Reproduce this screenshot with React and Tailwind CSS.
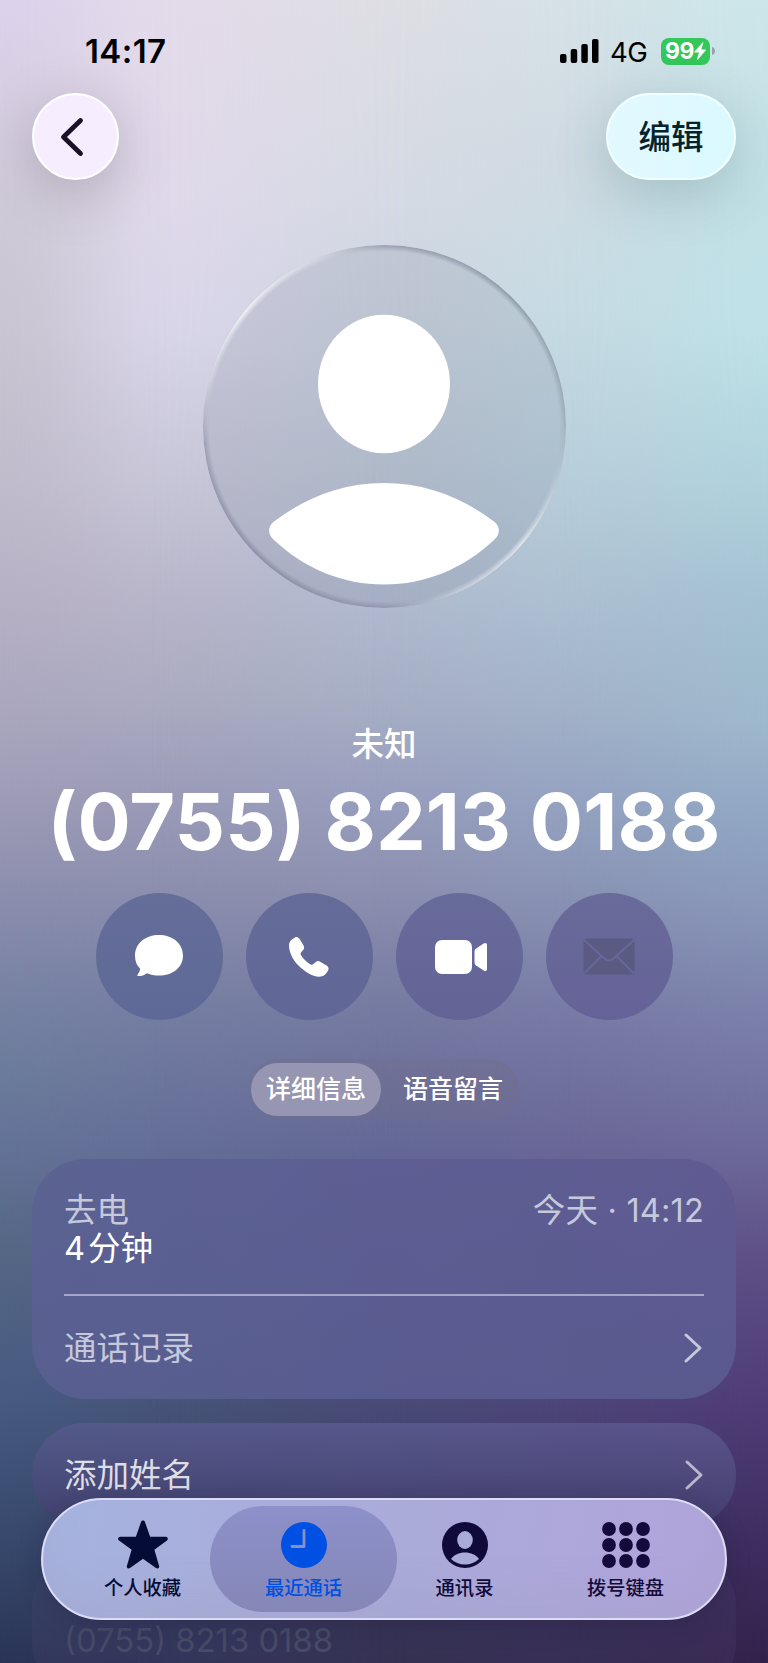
import React, { useState } from "react";

const font =
  "font-['Inter','Noto_Sans_CJK_SC',sans-serif]";

// Vertical colour ramps, each one eased in from left to right
const ramps = [
  "bg-[linear-gradient(180deg,#ddd2ec_0px,#cfcad8_200px,#c9c5d2_330px,#c0bccc_480px,#b7b1c5_600px,#aba8bf_700px,#a19eb8_780px,#8f90b0_880px,#7a84a5_980px,#6b7b9b_1080px,#657398_1140px,#566785_1250px,#475a82_1400px,#364669_1560px,#2a3556_1663px)]",
  "bg-[linear-gradient(180deg,#e4dbea_0px,#e0d9ea_200px,#dad6ea_330px,#c8c6d8_480px,#b8b5ca_600px,#ababc0_700px,#9c9cb9_790px,#8e90af_880px,#767fa3_1000px,#656f98_1140px,#515c82_1290px,#475478_1400px,#353d60_1560px,#2b3153_1663px)] [mask-image:linear-gradient(90deg,transparent_0px,rgba(0,0,0,0.16)_45px,rgba(0,0,0,0.5)_90px,rgba(0,0,0,0.84)_135px,black_180px)]",
  "bg-[linear-gradient(180deg,#dedee3_0px,#d5dae4_200px,#cad3de_330px,#bac5d4_480px,#b0bacf_600px,#a6afc4_700px,#999fbf_790px,#8e91b1_880px,#777ca2_1000px,#656997_1140px,#525487_1290px,#494b77_1400px,#363556_1560px,#2e2c4a_1663px)] [mask-image:linear-gradient(90deg,transparent_150px,rgba(0,0,0,0.16)_215px,rgba(0,0,0,0.5)_280px,rgba(0,0,0,0.84)_345px,black_410px)]",
  "bg-[linear-gradient(180deg,#d5e2e7_0px,#cfdae2_160px,#c7dce4_300px,#b9d0dc_460px,#acc0d1_600px,#a3b3c9_700px,#96a4c2_790px,#8b96b6_880px,#797da7_1000px,#6b6898_1140px,#574f85_1290px,#4e457a_1400px,#3a2f5c_1560px,#31284c_1663px)] [mask-image:linear-gradient(90deg,transparent_370px,rgba(0,0,0,0.16)_427px,rgba(0,0,0,0.5)_485px,rgba(0,0,0,0.84)_542px,black_600px)]",
  "bg-[linear-gradient(180deg,#cce6e9_0px,#c0e0e5_200px,#bee1e7_330px,#b0d2dc_480px,#a4c1d2_600px,#9db8cd_720px,#90a6c3_820px,#8a98ba_900px,#7c83ab_1000px,#6e6b9c_1140px,#5e4f86_1260px,#4f3d78_1400px,#3e2e60_1540px,#33224b_1663px)] [mask-image:linear-gradient(90deg,transparent_560px,rgba(0,0,0,0.16)_612px,rgba(0,0,0,0.5)_664px,rgba(0,0,0,0.84)_716px,black_768px)]",
];

function StatusBar() {
  return (
    <div className="flex h-[93px] items-start justify-between pl-[85px] pr-[53px] pt-[31px] text-black">
      <span className="text-[33px] font-semibold leading-[40px] tracking-[0.4px]">
        14:17
      </span>
      <div className="flex h-[40px] items-center">
        <svg width="39" height="24" viewBox="0 0 39 24">
          <rect x="0" y="15" width="6.5" height="9" rx="2" />
          <rect x="10.7" y="10" width="6.5" height="14" rx="2" />
          <rect x="21.3" y="5" width="6.5" height="19" rx="2" />
          <rect x="32" y="0" width="6.5" height="24" rx="2" />
        </svg>
        <span className="ml-[11px] w-[38px] whitespace-nowrap pt-[3px] text-[27.500px] leading-none tracking-[-0.5px]">
          4G
        </span>
        <div className="ml-[13px] flex h-[27px] w-[49px] items-center justify-center rounded-[8px] bg-[#34c759] text-white">
          <span className="text-[23px] font-bold leading-none tracking-[-0.5px]">
            99
          </span>
          <svg width="12" height="18" viewBox="0 0 12 18" fill="currentColor">
            <path d="M8.6.5.6 9.6c-.4.5-.1 1 .4 1h4L3 17.3c-.1.6.3.8.7.4l7.9-9.1c.4-.5.1-1-.4-1H7.3L9.300 1C9.400.3 9 .1 8.600.5Z" />
          </svg>
        </div>
        <svg className="ml-[2px]" width="3" height="8" viewBox="0 0 3 8">
          <path d="M0 0c4 1 4 7 0 8Z" fill="#93a3a8" />
        </svg>
      </div>
    </div>
  );
}

function Header() {
  return (
    <div className="flex items-center justify-between px-[32px]">
      <button className="flex h-[87px] w-[87px] items-center justify-center rounded-full border-2 border-white bg-[#f6eeff] shadow-[0_14px_54px_rgba(70,60,80,0.26)]">
        <svg
          className="-ml-[7px]"
          width="24"
          height="40"
          viewBox="0 0 24 40"
          fill="none"
          stroke="#1a1028"
          strokeWidth="4.800"
          strokeLinecap="round"
          strokeLinejoin="round"
        >
          <path d="M20.500 3.500 3.500 20 20.500 36.500" />
        </svg>
      </button>
      <button className="flex h-[87px] w-[130px] items-center justify-center rounded-full border-2 border-[#f2ffff] bg-linear-to-r from-[#e3f8ff] to-[#daf9ff] pt-[4px] text-[32.500px] font-medium text-[#06222a] shadow-[0_14px_54px_rgba(50,90,100,0.24)]">
        编辑
      </button>
    </div>
  );
}

function Avatar() {
  return (
    <div className="relative mx-auto mt-[65px] h-[363px] w-[363px] rounded-full bg-[#788294]/18">
      <svg width="363" height="363" viewBox="0 0 363 363" fill="white">
        <ellipse cx="181" cy="139" rx="66" ry="69.300" />
        <path d="M181 238c42 0 79 15 110 38.500 6.500 5 6.500 12.500 0 18.500-31 29-69 44.500-110 44.500S102 324 71 295c-6.500-6-6.500-13.500 0-18.500C102 253 139 238 181 238Z" />
      </svg>
      <div className="absolute inset-0 rounded-full bg-[conic-gradient(from_0deg,rgba(115,122,142,0.5)_0deg,rgba(115,125,142,0.6)_45deg,rgba(125,140,150,0.4)_85deg,rgba(255,255,255,0.1)_105deg,rgba(255,255,255,0.7)_130deg,rgba(255,255,255,0.4)_155deg,rgba(115,118,145,0.4)_180deg,rgba(115,118,145,0.6)_225deg,rgba(115,118,145,0.4)_265deg,rgba(255,255,255,0.3)_285deg,rgba(255,255,255,0.8)_310deg,rgba(255,255,255,0.3)_338deg,rgba(115,122,142,0.5)_360deg)] [mask-image:radial-gradient(circle_closest-side,transparent_96.500%,black_99.800%)]" />
    </div>
  );
}

const actions = [
  {
    id: "message",
    bg: "bg-linear-to-b from-[#656e99] to-[#5f6997]",
    icon: (
      <svg width="50" height="46" viewBox="0 0 50 46" fill="white">
        <path d="M25 1C38 1 49 9 49 21.500S38 41.500 25 41.500c-4.500 0-8.500-.8-12-2.300-2.600 2-5.500 2.800-8.500 2.800-1.200 0-1.500-.9-.8-1.800 1.600-1.700 2.400-3.400 2.300-5.600C2.700 31.500 1 27 1 21.500 1 9 12 1 25 1Z" />
      </svg>
    ),
  },
  {
    id: "call",
    bg: "bg-linear-to-b from-[#656c99] to-[#606797]",
    icon: (
      <svg width="42" height="42" viewBox="0 0 42 42" fill="white">
        <path d="M7 1.500C9 .5 10.500 1.500 12 3.500l3.500 6c1 2 .8 3-.3 4.500l-2 2.300c-.8 1-.8 1.800 0 3.200 2 3.300 5.500 6.700 9 8.700 1.300.8 2.300.7 3.200-.1l2.400-2c1.400-1.200 2.600-1.300 4.400-.3l6.300 3.700c2 1.300 2.600 2.800 1.700 4.800-1.700 3.800-5 6.400-9 6.400-7 0-15-5.500-21-11.500S1 15.500 1 9.500C1 6 3.500 3 7 1.500Z" />
      </svg>
    ),
  },
  {
    id: "video",
    bg: "bg-linear-to-b from-[#676b9a] to-[#636496]",
    icon: (
      <svg
        className="ml-[3px]"
        width="54"
        height="36"
        viewBox="0 0 54 36"
        fill="white"
      >
        <rect x="1" y="1" width="37" height="34" rx="7" />
        <path d="M40.500 13c0-1.500.4-2.500 1.600-3.500l7.500-5C51.500 3.300 53 4 53 6v24c0 2-1.500 2.700-3.400 1.500l-7.500-5c-1.200-1-1.600-2-1.600-3.500Z" />
      </svg>
    ),
  },
  {
    id: "mail",
    bg: "bg-linear-to-b from-[#696b9a] to-[#656297]",
    icon: (
      <svg width="52" height="37" viewBox="0 0 52 37">
        <rect x="0.500" y="0.500" width="51" height="36" rx="4" fill="#5a5a83" />
        <path
          d="M1 2 21.500 20.500c3 2.700 6 2.700 9 0L51 2M1.500 35 18 18.500M50.500 35 34 18.500"
          fill="none"
          stroke="#67679a"
          strokeWidth="2"
        />
      </svg>
    ),
  },
];

function Chevron({ className = "" }) {
  return (
    <svg
      className={className}
      width="20"
      height="32"
      viewBox="0 0 20 32"
      fill="none"
      stroke="currentColor"
      strokeWidth="3"
      strokeLinecap="round"
      strokeLinejoin="round"
    >
      <path d="M3 3 17 16 3 29" />
    </svg>
  );
}

function CallCard() {
  return (
    <div className="mx-[32px] mt-[39px] h-[240px] rounded-[54px] bg-[linear-gradient(170deg,transparent_0%,rgba(78,84,134,0.4)_100%),linear-gradient(90deg,#5b6393_0%,#5e5f94_50%,#625c94_100%)] px-[32px] text-[32.500px] text-[#c6c8dc]">
      <div className="h-[135px] pt-[33px]">
        <div className="flex justify-between leading-[38px]">
          <span>去电</span>
          <span className="tracking-[0.2px]">今天 · 14:12</span>
        </div>
        <div className="leading-[38px] text-white">
          <span className="mr-[3px]">4</span>分钟
        </div>
      </div>
      <div className="h-[2px] bg-[#a5a6c8]" />
      <div className="flex h-[103px] items-center justify-between">
        <span className="pt-[4px]">通话记录</span>
        <Chevron className="mr-px" />
      </div>
    </div>
  );
}

const tabs = [
  {
    id: "favorites",
    label: "个人收藏",
    color: "text-[#050c36]",
    icon: (
      <svg width="50" height="50" viewBox="0 0 50 50" fill="currentColor">
        <path
          d="M25 2.500 30.600 18.500 47.800 18.800 34.100 29 39.200 46.500 25 36.300 10.800 46.500 15.900 29 2.200 18.800 19.400 18.500Z"
          stroke="currentColor"
          strokeWidth="4"
          strokeLinejoin="round"
        />
      </svg>
    ),
  },
  {
    id: "recents",
    label: "最近通话",
    color: "text-[#0050e3]",
    icon: (
      <svg width="46" height="46" viewBox="0 0 46 46">
        <circle cx="23" cy="23" r="23" fill="currentColor" />
        <path
          d="M23 8.500V24.500H11"
          fill="none"
          stroke="#8b90c4"
          strokeWidth="2.800"
          strokeLinecap="round"
          strokeLinejoin="round"
        />
      </svg>
    ),
  },
  {
    id: "contacts",
    label: "通讯录",
    color: "text-[#100a3a]",
    icon: (
      <svg width="46" height="46" viewBox="0 0 46 46">
        <circle cx="23" cy="23" r="23" fill="currentColor" />
        <ellipse cx="23" cy="18" rx="7.800" ry="9" fill="#aaabd7" />
        <path
          d="M9 37c3-4.200 8-6.500 14-6.500S34 32.800 37 37c-3.500 3.500-8.500 5.500-14 5.500S12.500 40.500 9 37Z"
          fill="#aaabd7"
        />
      </svg>
    ),
  },
  {
    id: "keypad",
    label: "拨号键盘",
    color: "text-[#140a3c]",
    icon: (
      <svg width="48" height="46" viewBox="0 0 48 46" fill="currentColor">
        {[7, 23, 39].map((cy) =>
          [7, 24, 41].map((cx) => (
            <circle key={`${cx}-${cy}`} cx={cx} cy={cy} r="6.900" />
          ))
        )}
      </svg>
    ),
  },
];

function TabBar({ active, onChange }) {
  return (
    <nav className="absolute bottom-[43px] left-[41px] flex h-[122px] w-[686px] rounded-full border-2 border-[#dcdcf8] bg-[linear-gradient(100deg,#a6b3df_0%,#aaabd9_50%,#b1a4dc_100%)] px-[6px] py-[6px] shadow-[inset_0_-30px_30px_rgba(160,160,190,0.25),0_4px_24px_rgba(20,20,50,0.25)]">
      {tabs.map((tab) => (
        <button
          key={tab.id}
          onClick={() => onChange(tab.id)}
          className={`-mr-[26px] flex h-[106px] w-[187px] shrink-0 flex-col items-center rounded-full pt-[14px] ${tab.color} ${
            active === tab.id ? "bg-linear-to-b from-[#8d90ca] to-[#8587b6]" : ""
          }`}
        >
          <span className="flex h-[50px] items-center">{tab.icon}</span>
          <span className="mt-[6px] text-[19.300px] font-medium leading-[24px]">
            {tab.label}
          </span>
        </button>
      ))}
    </nav>
  );
}

export default function App() {
  const [activeTab, setActiveTab] = useState("recents");

  return (
    <div
      className={`relative h-[1663px] w-[768px] overflow-hidden ${font}`}
    >
      {ramps.map((ramp) => (
        <div key={ramp} className={`absolute inset-0 ${ramp}`} />
      ))}

      <div className="relative">
        <StatusBar />
        <Header />
        <Avatar />

        <div className="mt-[112px] text-center text-white">
          <p className="pt-px text-[32.500px] font-medium leading-[47px]">
            未知
          </p>
          <h1 className="whitespace-nowrap pt-[2px] text-[79px] font-bold leading-[102px] tracking-[0.100px]">
            (0755) 8213 0188
          </h1>
        </div>

        <div className="mt-[21px] flex justify-center gap-[23px]">
          {actions.map((action) => (
            <button
              key={action.id}
              className={`flex h-[127px] w-[127px] items-center justify-center rounded-full ${action.bg}`}
            >
              {action.icon}
            </button>
          ))}
        </div>

        <div className="mx-auto mt-[39px] flex h-[61px] w-[270px] items-center rounded-full bg-[#706f8c]/40 px-[2px] text-[25px] font-medium text-white">
          <span className="flex h-[53px] w-[130px] items-center justify-center rounded-full bg-[#9696b2] pt-px">
            详细信息
          </span>
          <span className="flex-1 pl-[22px] pt-px">语音留言</span>
        </div>

        <CallCard />

        <div className="mx-[32px] mt-[24px] flex h-[104px] items-center justify-between rounded-full bg-[linear-gradient(180deg,transparent_0%,rgba(58,54,98,0.7)_100%),linear-gradient(90deg,#525a8a_0%,#57578b_50%,#5a538b_100%)] px-[32px] text-[32.500px] text-[#dedee6]">
          <span className="pt-[2px]">添加姓名</span>
          <Chevron className="text-[#b9b7cb]" />
        </div>

        <div className="mx-[32px] mt-[24px] h-[146px] rounded-[54px] bg-[#4a4470]/25 px-[32px] pt-[69px] text-[32.800px] leading-[40px] text-[#474b68]">
          (0755) 8213 0188
        </div>
      </div>

      <TabBar active={activeTab} onChange={setActiveTab} />
    </div>
  );
}
